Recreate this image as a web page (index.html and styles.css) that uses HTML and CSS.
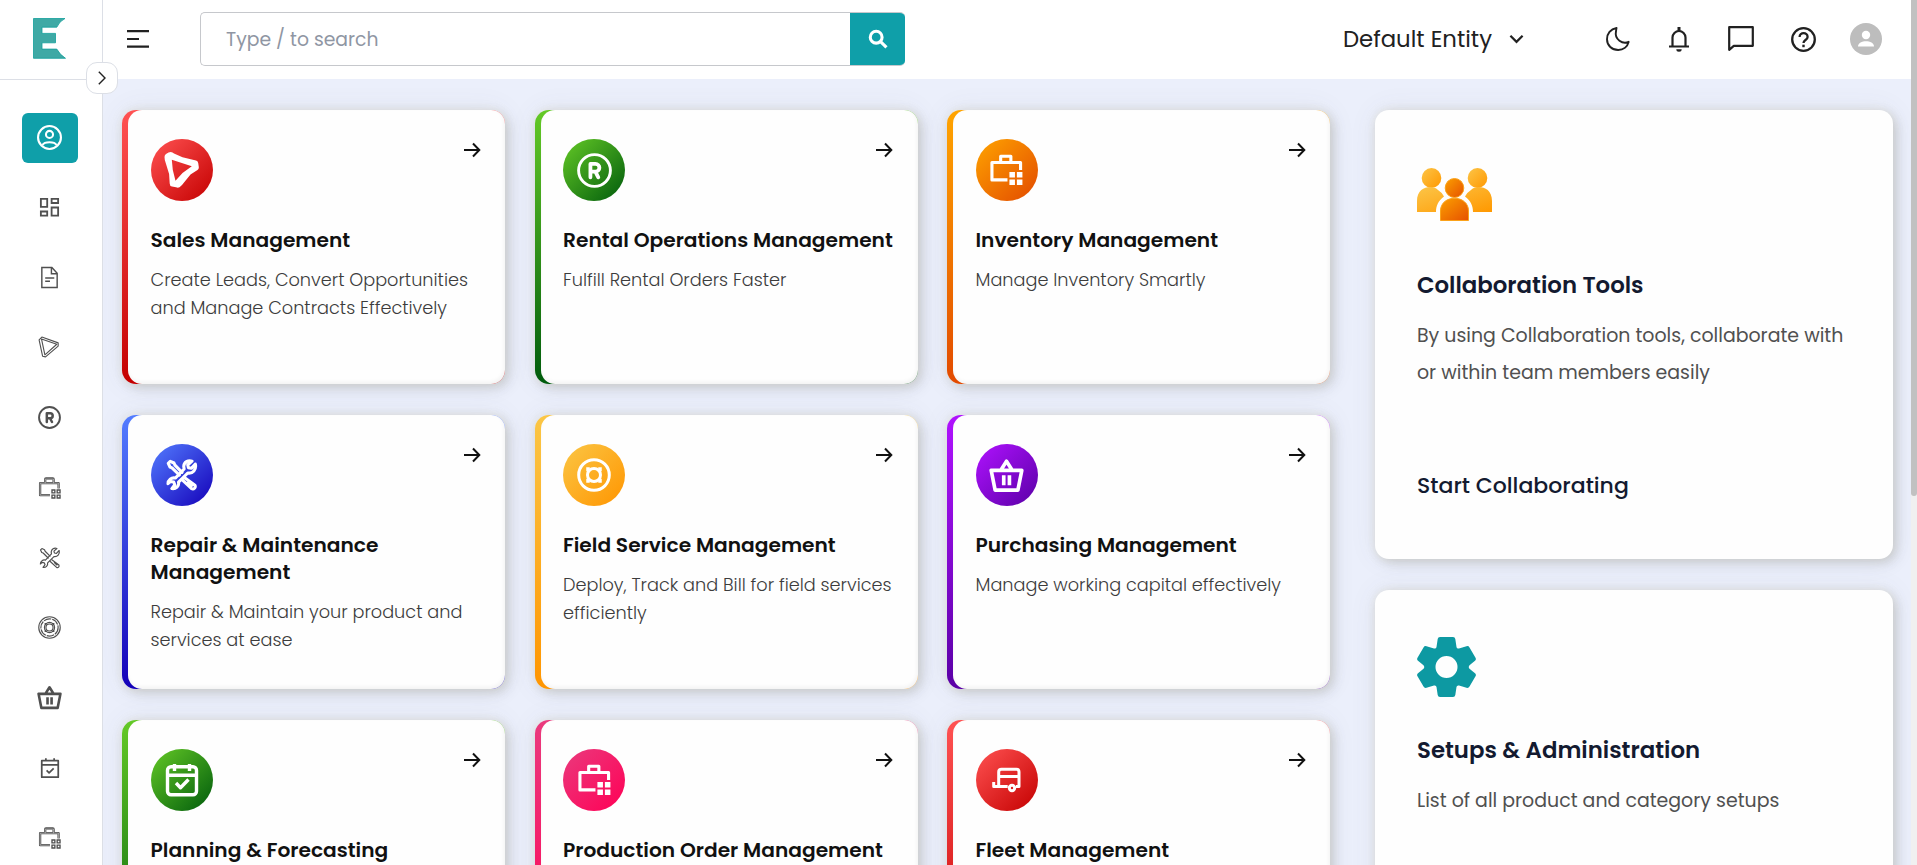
FILE: index.html
```html
<!DOCTYPE html>
<html lang="en">
<head>
<meta charset="utf-8">
<title>Dashboard</title>
<link rel="stylesheet" href="styles.css">
</head>
<body>
<svg class="sprite" aria-hidden="true">
  <defs>
    <linearGradient id="amber" x1="0" y1="0" x2="1" y2="1"><stop offset="0" stop-color="#fcc548"/><stop offset="1" stop-color="#ff9800"/></linearGradient>
    <linearGradient id="orange" x1="0" y1="0" x2="1" y2="1"><stop offset="0" stop-color="#fb9f00"/><stop offset="1" stop-color="#e65100"/></linearGradient>
  </defs>
  <symbol id="i-user" viewBox="0 0 24 24"><g fill="none" stroke="currentColor" stroke-width="2"><circle cx="12" cy="12" r="11"/><circle cx="12" cy="9" r="3.4"/><path d="M5.2 19.2C6.500 16.900 9 16.500 12 16.500s5.500.4 6.800 2.700"/></g></symbol>
  <symbol id="i-grid" viewBox="0 0 24 24"><g fill="none" stroke="currentColor" stroke-width="1.900"><path d="M3 3h6.600v8.300H3zM14.200 3h6.800v4.300h-6.800zM3 16.200h6.600v4.300H3zM14.200 12h6.800v8.500h-6.800z"/></g></symbol>
  <symbol id="i-doc" viewBox="0 0 24 24"><g fill="none" stroke="currentColor" stroke-width="1.500"><path d="M4 1.500h10.500l5.500 6v15H4zM14 1.500V8h6M7.500 12.500h9.500M7.500 16h5"/></g></symbol>
  <symbol id="i-play" viewBox="0 0 24 24"><g fill="none" stroke="currentColor" stroke-width="1.200" stroke-linejoin="round"><path d="M3.800 3.200 20.500 9 7.500 20.500z"/><path d="M1.200 4.200 4.200 1.200 22 7.500V11L8.200 22.800 5 22z"/></g></symbol>
  <symbol id="i-play-bold" viewBox="0 0 34 36"><path fill="currentColor" fill-rule="evenodd" d="M0 5Q0 3 1.500 2L4 .6Q6-.4 8 .4L9.500 1.600 18 5.300 31.500 8.600Q33.300 9 33.700 11L34.300 15Q34.500 17 33 18L26 22.600 17.500 33 15 35.200Q13.500 36 11.500 35.300L7.500 34.600Q5.200 34 5.200 31.500L4.600 22 .3 8zM7.300 7.700 27.300 14.300 18 21 11 28.700Q7.500 18 7.300 7.700z"/></symbol>
  <symbol id="i-reg" viewBox="0 0 24 24"><g fill="none" stroke="currentColor" stroke-width="2"><circle cx="12" cy="12" r="10.900"/><path stroke-width="2.600" stroke-linejoin="round" stroke-linecap="round" d="M9.200 16.700V7.500h3.500a2.600 2.600 0 0 1 0 5.300H9.500M12.700 13l1.900 3.700"/></g></symbol>
  <symbol id="i-case" viewBox="0 0 24 24"><g fill="none" stroke="currentColor"><path stroke-width="2.400" stroke-linejoin="round" d="M12.500 20H2.200V7.500h19.300v5.500M7.500 7.500V3.400Q7.500 2.600 8.300 2.600h7.200q.8 0 .8.800v4.100"/></g><g fill="none" stroke="#fff" stroke-width=".5"><path d="M12.500 20H2.200V7.500h19.300v5.500M7.500 7.500V3.200h8.800v4.300"/></g><path fill="#fff" stroke="currentColor" stroke-width="1.400" d="M14.600 14.600h3v3h-3zM20 14.600h3v3h-3zM14.600 20h3v3h-3zM20 20h3v3h-3z"/></symbol>
  <symbol id="i-case-bold" viewBox="0 0 34 32"><path fill="none" stroke="currentColor" stroke-width="3.200" stroke-linejoin="round" d="M18 26.200H2V8.200h29.500V16M11 8V1.800h10.500V8"/><path fill="currentColor" d="M20 18h5.700v5.700H20zM27.700 18h5.700v5.700h-5.700zM20 25.700h5.700v5.700H20zM27.700 25.700h5.700v5.700h-5.700z"/></symbol>
  <symbol id="i-tools" viewBox="0 0 24 24"><g fill="none" stroke="currentColor" stroke-linecap="round" stroke-linejoin="round"><path d="M10 12 4.500 6.600 3 6 1.700 3.200 3.200 1.700 6 3l.7 1.600L12 10M14 14l7.700 5.700a1.900 1.900 0 0 1-2.500 2.600L12 15.500M16.800 17l2.700 2.600"/><path d="M22 3.800 19 7l-2.200-.5L16.300 4.500 19.500 1.600C16.500.6 13.500 2.300 13.300 5.500L13.600 7.500 7 14.300C4 13.500 1.500 16 1.500 18.500l2-1.700 2.300.5.800 2-2.200 2.900c3 .5 5.600-1.900 5-4.800L16.300 10.500C20 11.200 23 7.800 22 3.800z"/></g></symbol>
  <symbol id="i-life" viewBox="0 0 24 24"><g fill="none" stroke="currentColor" stroke-width="1.200"><circle cx="12" cy="12" r="11.200"/><circle cx="12" cy="12" r="9" stroke-dasharray="8 1"/><circle cx="12" cy="12" r="5.300"/><circle cx="12" cy="12" r="3.700"/><path d="M8 7.300V9M16 7.300V9M8 16.700V15M16 16.700V15" stroke-width="2.200"/></g></symbol>
  <symbol id="i-life-bold" viewBox="0 0 34 34"><g fill="none" stroke="currentColor" stroke-width="3"><circle cx="17" cy="17" r="15.300"/><circle cx="17" cy="17" r="6.500"/><path d="M11 9.300v4M23 9.300v4M11 24.700v-4M23 24.700v-4" stroke-width="3.500"/></g></symbol>
  <symbol id="i-basket" viewBox="0 0 24 24"><g fill="none" stroke="currentColor" stroke-width="2.500" stroke-linejoin="round"><path d="M1.500 8.500h21L19.800 22H4.200zM8.300 8 12 2.200 15.700 8M10.100 11.800v6.900M14 11.800v6.900"/></g></symbol>
  <symbol id="i-cal" viewBox="0 0 24 24"><g fill="none" stroke="currentColor" stroke-width="1.900" stroke-linejoin="round"><path d="M3 4h18v18H3zM3 8.700h18M7.500 1.300V4M16.500 1.300V4"/><path d="m8.300 14.700 2.700 2.700 5-5"/></g></symbol>
  <symbol id="i-cal-bold" viewBox="0 0 34 34"><g fill="none" stroke="currentColor" stroke-width="3.400" stroke-linejoin="round"><rect x="2.500" y="3.800" width="29" height="28" rx="3.500"/><path d="M2.500 12.300h29M9.500 1v7M24.500 1v7M11 20l4.500 4.700 8-8.200"/></g></symbol>
  <symbol id="i-trailer" viewBox="0 0 30 26"><g fill="none" stroke="currentColor" stroke-width="3" stroke-linejoin="round"><path d="M1.700 15v4.500h14M6.700 19V5q0-2.800 2.800-2.800h15q2.500 0 2.500 2.800v14.500h-3M7 9.500h20"/><circle cx="20" cy="21" r="2.700"/></g></symbol>
  <symbol id="i-arrow" viewBox="0 0 18 16"><path fill="none" stroke="currentColor" stroke-width="2" d="M1 8h15M10 1.500 16.300 8 10 14.500"/></symbol>
</svg>

<div class="app">
  <aside class="sidebar">
    <div class="brand">
      <svg class="logo" viewBox="0 0 33 41"><path fill="#3fa9a5" stroke="#12a09b" stroke-width=".8" d="M.5.500H32Q26.500 3 23.800 9.200H9v6.200h13.500v9.400H9v6.300h14.800Q27 37 32.500 40.300H.5z"/></svg>
    </div>
    <nav class="nav">
      <a class="nav-item active"><svg class="ico-25"><use href="#i-user"/></svg></a>
      <a class="nav-item"><svg><use href="#i-grid"/></svg></a>
      <a class="nav-item"><svg><use href="#i-doc"/></svg></a>
      <a class="nav-item play"><svg class="ico-22"><use href="#i-play"/></svg></a>
      <a class="nav-item"><svg><use href="#i-reg"/></svg></a>
      <a class="nav-item"><svg><use href="#i-case"/></svg></a>
      <a class="nav-item"><svg class="ico-22 thin"><use href="#i-tools"/></svg></a>
      <a class="nav-item"><svg><use href="#i-life"/></svg></a>
      <a class="nav-item"><svg class="ico-25"><use href="#i-basket"/></svg></a>
      <a class="nav-item"><svg class="ico-22"><use href="#i-cal"/></svg></a>
      <a class="nav-item"><svg><use href="#i-case"/></svg></a>
    </nav>
    <button class="toggle"><svg viewBox="0 0 8 14"><path fill="none" stroke="#222" stroke-width="1.400" d="M.8.800 7 7 .8 13.200"/></svg></button>
  </aside>

  <div class="page">
    <header class="topbar">
      <svg class="burger" viewBox="0 0 22 18"><path fill="none" stroke="#212121" stroke-width="2.200" d="M0 1.200h22M0 9h12M0 16.600h22"/></svg>
      <div class="search">
        <span class="placeholder">Type / to search</span>
        <button class="search-btn"><svg viewBox="0 0 22 22"><g fill="none" stroke="#fff" stroke-width="3.400"><circle cx="9" cy="9" r="6.500"/><path d="m13.800 13.800 6.500 6.500"/></g></svg></button>
      </div>
      <div class="entity"><span class="entity-name">Default Entity</span><svg viewBox="0 0 16 10"><path fill="none" stroke="#212121" stroke-width="2.400" d="m1.500 1.500 6.500 6.500 6.500-6.500"/></svg></div>
      <div class="tools">
        <svg class="t-moon" viewBox="0 0 24 24"><path fill="none" stroke="#212121" stroke-width="1.900" stroke-linejoin="round" d="M10.500 1C4.500 2 1 6.800 1 12.200 1 18.500 6 23 12.200 23c5 0 9.300-3.200 10.500-8.200-6 2.800-14.500-2.300-12.700-10.500.1-1.200.3-2.300.5-3.300z"/></svg>
        <svg class="t-bell" viewBox="0 0 20 25"><path fill="none" stroke="#212121" stroke-width="2.200" d="M0 19.500h20M3.500 19.500V10.500a6.500 6.500 0 0 1 13 0v9"/><path fill="#212121" d="M8.500 0h3v4h-3zM7.300 22.200h5.400a2.700 2.500 0 0 1-5.400 0z"/></svg>
        <svg class="t-chat" viewBox="0 0 26 26"><path fill="none" stroke="#212121" stroke-width="2.200" stroke-linejoin="round" d="M1.200 1.200h23.600v18.600H5.800l-4.600 4z"/></svg>
        <svg class="t-help" viewBox="0 0 25 25"><g fill="none" stroke="#212121" stroke-width="2.300"><circle cx="12.500" cy="12.500" r="11.300"/><path d="M8.600 9.900c0-5 8-5 8 0 0 3-4.100 3.200-4.100 6"/></g><rect x="11.300" y="17.700" width="2.400" height="2.500" fill="#212121"/></svg>
        <svg class="t-avatar" viewBox="0 0 32 32"><circle cx="16" cy="16" r="16" fill="#bdbdbd"/><circle cx="16" cy="12" r="4.200" fill="#fff"/><path fill="#fff" d="M8 23.500c0-7 16-7 16 0z"/></svg>
      </div>
    </header>

    <main class="content">
      <section class="modules">
        <article class="card sales"><div class="card-body">
          <div class="card-top"><span class="badge"><svg class="b-play"><use href="#i-play-bold"/></svg></span><svg class="arrow"><use href="#i-arrow"/></svg></div>
          <h3>Sales Management</h3><p>Create Leads, Convert Opportunities<br>and Manage Contracts Effectively</p></div></article>
        <article class="card rental"><div class="card-body">
          <div class="card-top"><span class="badge"><svg class="b-reg"><use href="#i-reg"/></svg></span><svg class="arrow"><use href="#i-arrow"/></svg></div>
          <h3>Rental Operations Management</h3><p>Fulfill Rental Orders Faster</p></div></article>
        <article class="card inventory"><div class="card-body">
          <div class="card-top"><span class="badge"><svg class="b-case"><use href="#i-case-bold"/></svg></span><svg class="arrow"><use href="#i-arrow"/></svg></div>
          <h3>Inventory Management</h3><p>Manage Inventory Smartly</p></div></article>
        <article class="card repair"><div class="card-body">
          <div class="card-top"><span class="badge"><svg class="b-tools"><use href="#i-tools"/></svg></span><svg class="arrow"><use href="#i-arrow"/></svg></div>
          <h3>Repair &amp; Maintenance<br>Management</h3><p>Repair &amp; Maintain your product and<br>services at ease</p></div></article>
        <article class="card field"><div class="card-body">
          <div class="card-top"><span class="badge"><svg class="b-life"><use href="#i-life-bold"/></svg></span><svg class="arrow"><use href="#i-arrow"/></svg></div>
          <h3>Field Service Management</h3><p>Deploy, Track and Bill for field services<br>efficiently</p></div></article>
        <article class="card purchasing"><div class="card-body">
          <div class="card-top"><span class="badge"><svg class="b-basket"><use href="#i-basket"/></svg></span><svg class="arrow"><use href="#i-arrow"/></svg></div>
          <h3>Purchasing Management</h3><p>Manage working capital effectively</p></div></article>
        <article class="card planning"><div class="card-body">
          <div class="card-top"><span class="badge"><svg class="b-cal"><use href="#i-cal-bold"/></svg></span><svg class="arrow"><use href="#i-arrow"/></svg></div>
          <h3>Planning &amp; Forecasting</h3></div></article>
        <article class="card production"><div class="card-body">
          <div class="card-top"><span class="badge"><svg class="b-case"><use href="#i-case-bold"/></svg></span><svg class="arrow"><use href="#i-arrow"/></svg></div>
          <h3>Production Order Management</h3></div></article>
        <article class="card fleet"><div class="card-body">
          <div class="card-top"><span class="badge"><svg class="b-trailer"><use href="#i-trailer"/></svg></span><svg class="arrow"><use href="#i-arrow"/></svg></div>
          <h3>Fleet Management</h3></div></article>
      </section>

      <section class="side">
        <article class="panel">
          <div class="panel-icon group"><svg viewBox="0 0 75 53">
            <g fill="url(#amber)"><ellipse cx="14.500" cy="10" rx="9.800" ry="10"/><ellipse cx="60.500" cy="10" rx="9.800" ry="10"/><path d="M0 44V33C0 17 17 17 21 22q3.500 2 6 6.500C21 33 19 38 19 44zM75 44V33C75 17 58 17 54 22q-3.500 2-6 6.500C54 33 56 38 56 44z"/></g>
            <g fill="url(#orange)" stroke="#fba21a" stroke-width="1"><ellipse cx="37.500" cy="20" rx="9.300" ry="9.500"/><path d="M23.500 52.500V43c0-17 28-17 28 0v9.500z"/></g></svg></div>
          <h2>Collaboration Tools</h2>
          <p>By using Collaboration tools, collaborate with<br>or within team members easily</p>
          <a class="cta">Start Collaborating</a>
        </article>
        <article class="panel">
          <div class="panel-icon"><svg class="gear" viewBox="0 0 59 60"><path fill="#0d99a2" fill-rule="evenodd" d="M23 0h13q2 0 2.300 2l1.200 8q.3 2 2.500 1.500l7.500-2.300q2-.6 3 1.200l6 10.300q1 1.700-.5 3l-5.500 4.500q-1.500 1.800 0 3.600l5.500 4.500q1.500 1.300.5 3l-6 10.300q-1 1.800-3 1.200L42 48.500q-2.200-.5-2.500 1.500l-1.200 8q-.3 2-2.300 2H23q-2 0-2.300-2l-1.200-8q-.3-2-2.500-1.500l-7.500 2.300q-2 .6-3-1.200l-6-10.300q-1-1.700.5-3l5.500-4.500q1.500-1.800 0-3.600L1 23.700q-1.500-1.300-.5-3l6-10.300q1-1.800 3-1.200l7.500 2.300q2.200.5 2.500-1.500l1.200-8q.3-2 2.300-2zM29.500 19a11 11 0 1 0 0 22 11 11 0 0 0 0-22z"/></svg></div>
          <h2>Setups &amp; Administration</h2>
          <p>List of all product and category setups</p>
        </article>
      </section>
    </main>
  </div>
  <div class="scroll-track"><div class="scroll-thumb"></div></div>
</div>
</body>
</html>
```
FILE: styles.css
```css
* { box-sizing: border-box; }
html, body { height: 100%; overflow: hidden; }
body { margin: 0; font-family: "Poppins", "Inter", sans-serif; background: #fff; color: #111; }
h2, h3, p { margin: 0; white-space: nowrap; }
button { padding: 0; border: 0; cursor: pointer; }
.sprite { position: absolute; width: 0; height: 0; }

.app { display: flex; height: 865px; width: 1917px; overflow: hidden; }

.sidebar { position: relative; z-index: 2; flex: none; width: 103px; background: #fff; border-right: 1px solid #dcdfe6; }
.brand { height: 80px; padding: 18px 0 0 33px; border-bottom: 1px solid #dcdfe6; }
.logo { display: block; width: 33px; height: 41px; }
.nav { display: flex; flex-direction: column; gap: 20px; padding: 33px 0 0 22px; }
.nav-item { flex: none; display: flex; align-items: center; justify-content: center; width: 56px; height: 50px; padding: 0 1px 1px 0; border-radius: 6px; color: #505050; }
.nav-item svg { width: 23px; height: 23px; }
.nav-item svg.ico-25 { width: 25px; height: 25px; }
.nav-item svg.ico-22 { width: 22px; height: 22px; }
.nav-item svg.thin { stroke-width: 1.3; }
.nav-item.play { padding: 0 3px 2px 0; }
.nav-item.active { background: #0f9fa9; color: #fff; }
.toggle { position: absolute; left: 86px; top: 62px; width: 32px; height: 32px; border: 1px solid #dcdfe6; border-radius: 11px; background: #fff; display: flex; align-items: center; justify-content: center; }
.toggle svg { width: 8px; height: 14px; margin: 0 1px 1px 0; }

.page { flex: none; width: 1808px; display: flex; flex-direction: column; }
.topbar { flex: none; height: 79px; display: flex; align-items: center; padding: 0 29px 1px 24px; background: #fff; }
.burger { width: 22px; height: 18px; flex: none; }
.search { display: flex; flex: none; width: 705px; height: 54px; margin-left: 51px; border: 1px solid #c6c8cc; border-right: 0; border-radius: 5px; overflow: hidden; }
.placeholder { flex: 1; padding-left: 25px; line-height: 53px; font-size: 18.8px; color: #8f96a3; }
.search-btn { width: 55px; margin: -1px 0; display: flex; align-items: center; justify-content: center; background: #0f9fa9; }
.search-btn svg { width: 20px; height: 20px; }
.entity { display: flex; align-items: center; gap: 17px; margin-left: auto; margin-right: 82px; font-size: 22.8px; line-height: 30px; color: #212121; }
.entity-name { margin-top: -1px; }
.entity svg { width: 15px; height: 10px; }
.tools { display: flex; align-items: center; }
.t-moon { width: 24px; height: 24px; margin-right: 39px; }
.t-bell { width: 20px; height: 25px; margin-right: 39px; }
.t-chat { width: 26px; height: 26px; margin-right: 37px; }
.t-help { width: 25px; height: 25px; margin-right: 34px; }
.t-avatar { width: 32px; height: 32px; }

.content { flex: 1; min-height: 0; display: flex; gap: 45px; padding: 31px 18px 0 19px; background: #ebeffb; overflow: hidden; }
.modules { display: grid; grid-template-columns: repeat(3, 383px); grid-auto-rows: 274px; gap: 31px 29.5px; }
.card, .panel { border-radius: 14px; box-shadow: 4px 4px 12px rgba(70, 70, 60, .18), 0 0 8px rgba(230, 228, 218, .7), 0 0 28px rgba(90, 95, 120, .08); }
.card { padding-left: 6px; background: linear-gradient(var(--from), var(--to)); }
.card-body { height: 100%; padding: 29px 24.5px 0 22.5px; border-radius: 14px; background: #fefefe; box-shadow: inset -1px -2px 4px rgba(0, 0, 0, .05); }
.card-top { display: flex; justify-content: space-between; }
.badge { display: flex; align-items: center; justify-content: center; width: 62px; height: 62px; border-radius: 50%; color: #fff; background: linear-gradient(135deg, var(--from), var(--to)); }
.arrow { width: 18px; height: 16px; margin-top: 3px; color: #111; }
.card h3 { margin-top: 26px; font-size: 20.2px; line-height: 27px; font-weight: 600; color: #111; }
.card p { margin-top: 12px; font-size: 17.7px; line-height: 27.5px; font-weight: 300; color: #3c3c3c; }
.b-play { width: 35px; height: 36px; }
.b-reg { width: 35px; height: 35px; }
.b-case { width: 33px; height: 32px; }
.b-tools { width: 32px; height: 32px; stroke-width: 2.3; }
.b-life { width: 34px; height: 34px; }
.b-basket { width: 35px; height: 35px; }
.b-cal { width: 34px; height: 34px; }
.b-trailer { width: 30px; height: 26px; }

.sales, .fleet { --from: #ff5252; --to: #c40000; }
.rental, .planning { --from: #64c926; --to: #005b0c; }
.inventory { --from: #ffa400; --to: #e24a00; }
.repair { --from: #537cff; --to: #1400b8; }
.field { --from: #fbc645; --to: #ff9500; }
.purchasing { --from: #b012ff; --to: #5a00a6; }
.production { --from: #ea3a7d; --to: #ff0055; }

.side { display: flex; flex-direction: column; gap: 31px; width: 518px; }
.panel { flex: none; height: 449px; padding: 47px 42px 0; background: #fefefe; color: #131a30; }
.panel-icon { height: 96.6px; }
.panel-icon.group { height: 111.6px; padding-top: 11px; }
.panel-icon svg { display: block; width: 75px; height: 53px; }
.panel-icon svg.gear { width: 59px; height: 60px; }
.panel h2 { font-size: 22.85px; line-height: 32px; font-weight: 600; }
.panel p { margin-top: 16.5px; font-size: 18.95px; line-height: 37px; color: #505050; }
.cta { display: block; margin-top: 80px; font-size: 22px; line-height: 30px; font-weight: 500; }

.scroll-track { flex: none; width: 6px; background: #f0f0f0; }
.scroll-thumb { height: 496px; background: #c1c1c1; border-radius: 0 0 3px 3px; }
```
